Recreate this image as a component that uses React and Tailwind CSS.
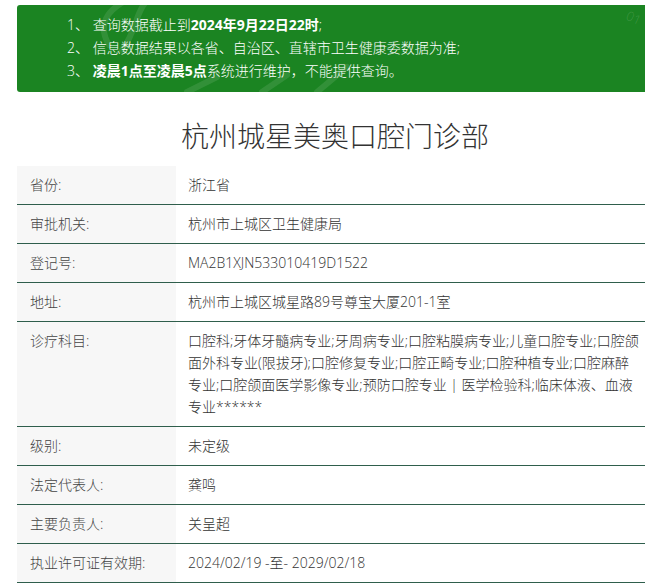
const ROWS = [
  { label: '省份:', value: '浙江省' },
  { label: '审批机关:', value: '杭州市上城区卫生健康局' },
  { label: '登记号:', value: 'MA2B1XJN533010419D1522' },
  { label: '地址:', value: '杭州市上城区城星路89号尊宝大厦201-1室' },
  {
    label: '诊疗科目:',
    value:
      '口腔科;牙体牙髓病专业;牙周病专业;口腔粘膜病专业;儿童口腔专业;口腔颌面外科专业(限拔牙);口腔修复专业;口腔正畸专业;口腔种植专业;口腔麻醉专业;口腔颌面医学影像专业;预防口腔专业 | 医学检验科;临床体液、血液专业******',
  },
  { label: '级别:', value: '未定级' },
  { label: '法定代表人:', value: '龚鸣' },
  { label: '主要负责人:', value: '关呈超' },
  { label: '执业许可证有效期:', value: '2024/02/19 -至- 2029/02/18' },
];

/**
 * Faint leaf watermark drawn over the notice box
 */
function Watermark() {
  return (
    <svg
      className="absolute inset-0 pointer-events-none"
      width="636"
      height="87"
      viewBox="0 0 636 87"
    >
      <g fill="none" stroke="#ffffff" strokeOpacity="0.1" strokeWidth="6" strokeLinecap="round">
        <path d="M92 40 C 80 20, 90 5, 110 -5" />
        <path d="M105 45 C 120 25, 118 10, 128 -2" />
        <path d="M170 87 L 200 72" />
        <path d="M245 87 L 270 70" />
        <path d="M300 87 L 330 62" />
      </g>
      <text x="608" y="14" fill="#ffffff" fillOpacity="0.15" fontSize="13" transform="rotate(25 608 14)">
        01
      </text>
    </svg>
  );
}

export default function App() {
  return (
    <div
      className="w-[645px] h-[583px] overflow-hidden bg-white text-[#333] font-light"
      style={{ fontFamily: '"Open Sans", "Noto Sans CJK SC", sans-serif' }}
    >
      <div className="ml-[17px] w-[636px]">
        {/* Notice */}
        <div className="relative mt-[5px] h-[87px] rounded-[3px] bg-[#1b8422] pl-[50px] pt-[8px] text-[14px] leading-[23px] text-white">
          <Watermark />
          <p className="relative">
            1、 查询数据截止到<b className="font-bold">2024年9月22日22时</b>;
          </p>
          <p className="relative">2、 信息数据结果以各省、自治区、直辖市卫生健康委数据为准;</p>
          <p className="relative">
            3、 <b className="font-bold">凌晨1点至凌晨5点</b>系统进行维护，不能提供查询。
          </p>
        </div>

        {/* Title */}
        <h1 className="mt-[24px] mb-[10px] text-center text-[28px] font-light leading-[40px] text-[#333]">
          杭州城星美奥口腔门诊部
        </h1>

        {/* Details */}
        <div>
          {ROWS.map((row) => (
            <div key={row.label} className="flex border-b border-[#2f5e4c] text-[14px] leading-[22px]">
              <div className="w-[159px] shrink-0 bg-[#f7f7f7] py-[8px] pl-[13px] text-[#444]">
                {row.label}
              </div>
              <div className="flex-1 py-[8px] pl-[12px] pr-[11px] text-[#333]">{row.value}</div>
            </div>
          ))}
        </div>
      </div>
    </div>
  );
}
